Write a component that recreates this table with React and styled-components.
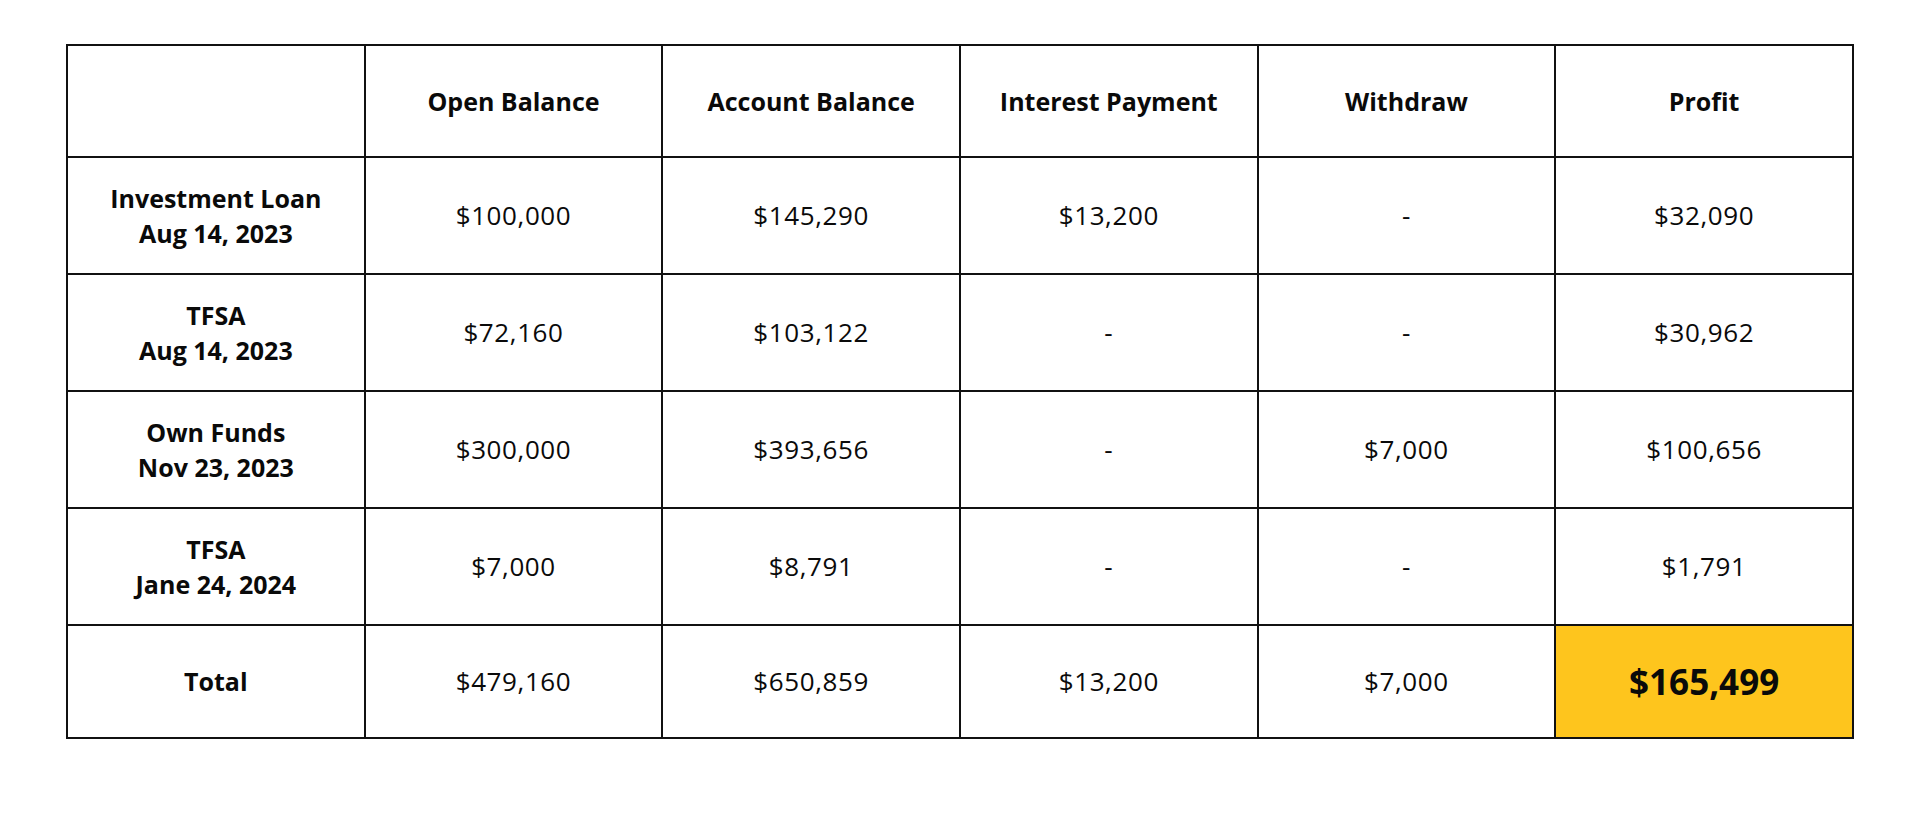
import styled, { createGlobalStyle } from "styled-components";

const GlobalStyle = createGlobalStyle`
  html, body {
    margin: 0;
    padding: 0;
    background: #ffffff;
  }
  body {
    font-family: "Open Sans", "Liberation Sans", sans-serif;
    color: #000;
  }
`;

const headers = [
  "",
  "Open Balance",
  "Account Balance",
  "Interest Payment",
  "Withdraw",
  "Profit",
];

const rows = [
  {
    name: "Investment Loan",
    date: "Aug 14, 2023",
    values: ["$100,000", "$145,290", "$13,200", "-", "$32,090"],
  },
  {
    name: "TFSA",
    date: "Aug 14, 2023",
    values: ["$72,160", "$103,122", "-", "-", "$30,962"],
  },
  {
    name: "Own Funds",
    date: "Nov 23, 2023",
    values: ["$300,000", "$393,656", "-", "$7,000", "$100,656"],
  },
  {
    name: "TFSA",
    date: "Jane 24, 2024",
    values: ["$7,000", "$8,791", "-", "-", "$1,791"],
  },
];

const totals = ["$479,160", "$650,859", "$13,200", "$7,000"];

function App() {
  return (
    <Wrapper>
      <GlobalStyle />
      <Table>
        <thead>
          <Row $height={112}>
            {headers.map((h, i) => (
              <HeadCell key={i}>{h}</HeadCell>
            ))}
          </Row>
        </thead>
        <tbody>
          {rows.map((r, i) => (
            <Row key={i} $height={117}>
              <LabelCell>
                {r.name}
                <br />
                {r.date}
              </LabelCell>
              {r.values.map((v, j) => (
                <Cell key={j}>{v}</Cell>
              ))}
            </Row>
          ))}
          <Row $height={113}>
            <LabelCell>Total</LabelCell>
            {totals.map((v, j) => (
              <Cell key={j}>{v}</Cell>
            ))}
            <Highlight>$165,499</Highlight>
          </Row>
        </tbody>
      </Table>
    </Wrapper>
  );
}

export default App;

const Wrapper = styled.div`
  padding: 44px 66px 0 66px;
`;

const Table = styled.table`
  width: 100%;
  border-collapse: collapse;
  table-layout: fixed;
`;

const Row = styled.tr`
  height: ${(p) => p.$height}px;
`;

const Cell = styled.td`
  border: 2px solid #111;
  text-align: center;
  vertical-align: middle;
  padding: 0 8px;
  font-size: 26px;
  font-weight: 400;
  letter-spacing: 0.6px;
  line-height: 35px;
  color: #0a0a0a;
`;

const HeadCell = styled.th`
  border: 2px solid #111;
  text-align: center;
  vertical-align: middle;
  padding: 0 8px;
  font-size: 25px;
  font-weight: 700;
  color: #0a0a0a;
`;

const LabelCell = styled(Cell)`
  font-size: 25px;
  font-weight: 700;
  letter-spacing: 0;
`;

const Highlight = styled(Cell)`
  background: #fec51d;
  font-size: 35px;
  font-weight: 700;
  letter-spacing: 0;
`;
